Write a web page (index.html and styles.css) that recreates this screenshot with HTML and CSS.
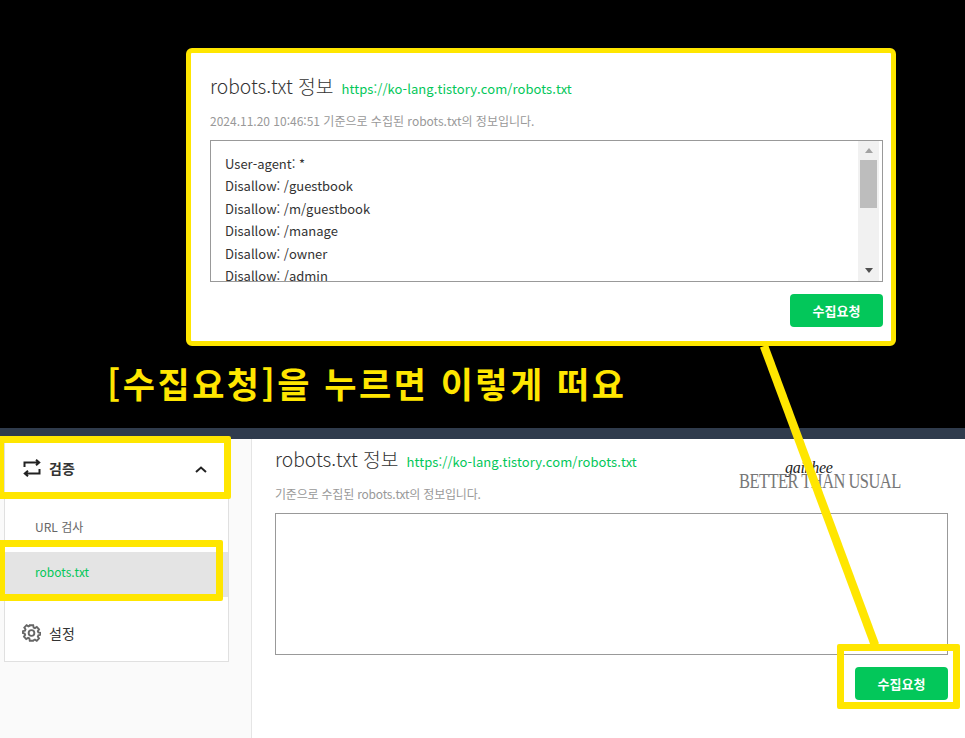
FILE: index.html
```html
<!DOCTYPE html>
<html lang="ko">
<head>
<meta charset="utf-8">
<title>robots.txt 정보</title>
<link rel="stylesheet" href="styles.css">
</head>
<body>
<div class="page">
  <section class="stage">
    <div class="popup">
      <div class="heading"><h2 class="title">robots.txt 정보</h2><a class="url">https://ko-lang.tistory.com/robots.txt</a></div>
      <p class="note">2024.11.20 10:46:51 기준으로 수집된 robots.txt의 정보입니다.</p>
      <div class="viewer">
        <div class="viewer-text">
          <div>User-agent: *</div>
          <div>Disallow: /guestbook</div>
          <div>Disallow: /m/guestbook</div>
          <div>Disallow: /manage</div>
          <div>Disallow: /owner</div>
          <div>Disallow: /admin</div>
        </div>
        <div class="scrollbar">
          <span class="arrow arrow-up"></span>
          <div class="track"><span class="thumb"></span></div>
          <span class="arrow arrow-down"></span>
        </div>
      </div>
      <div class="actions"><button class="submit">수집요청</button></div>
    </div>
    <p class="caption">[수집요청]을 누르면 이렇게 떠요</p>
  </section>
  <div class="topbar"></div>
  <div class="workspace">
    <aside class="sidebar">
      <nav class="menu">
        <div class="menu-head">
          <svg class="icon-swap" viewBox="0 0 18 18" width="18" height="18" aria-hidden="true"><path d="M1.500 8V3.500H16M13 .8l3.200 2.700L13 6.200M16.500 10v4.500H2M5 11.800l-3.200 2.700L5 17.200" fill="none" stroke="#222" stroke-width="2"/></svg>
          <span class="menu-label menu-label-strong">검증</span>
          <svg class="icon-chevron" viewBox="0 0 12 7" width="12" height="7" aria-hidden="true"><path d="M1 6l5-4.500L11 6" fill="none" stroke="#222" stroke-width="2"/></svg>
        </div>
        <a class="sub-item sub-item-first">URL 검사</a>
        <a class="sub-item sub-item-active">robots.txt</a>
        <div class="menu-foot">
          <svg class="icon-gear" viewBox="0 0 20 20" width="19" height="20" aria-hidden="true"><path d="M8 1h4l.5 2.600 1.500.7 2.200-1.400 2.600 2.800-1.400 2.100.6 1.500 2.400.6v2.200l-2.400.6-.6 1.500 1.400 2.100-2.600 2.800-2.200-1.400-1.500.7L12 19H8l-.5-2.600-1.500-.7-2.200 1.400-2.600-2.800 1.400-2.100-.6-1.500L0 10.100V7.900l2.400-.6.6-1.500-1.400-2.100 2.600-2.800 2.200 1.400 1.500-.7z" fill="none" stroke="#666" stroke-width="2.200" transform="translate(1 1) scale(.9)"/><circle cx="10" cy="10" r="3" fill="none" stroke="#666" stroke-width="2"/></svg>
          <span class="menu-label">설정</span>
        </div>
      </nav>
    </aside>
    <main class="content">
      <div class="heading"><h2 class="title">robots.txt 정보</h2><a class="url">https://ko-lang.tistory.com/robots.txt</a></div>
      <p class="note">기준으로 수집된 robots.txt의 정보입니다.</p>
      <div class="viewer viewer-empty"></div>
      <div class="actions"><button class="submit">수집요청</button></div>
    </main>
  </div>
  <div class="watermark"><span class="watermark-script">gaikhee</span><span class="watermark-text">BETTER THAN USUAL</span></div>
  <svg class="connector" viewBox="0 0 965 738" width="965" height="738" aria-hidden="true"><line x1="764" y1="346" x2="875" y2="645" stroke="#ffe600" stroke-width="8.500"/></svg>
  <div class="mark mark-head"></div>
  <div class="mark mark-item"></div>
  <div class="mark mark-button"></div>
</div>
</body>
</html>
```
FILE: styles.css
```css
* { box-sizing: border-box; }
html, body { margin: 0; padding: 0; }
body {
  background: #fff;
  color: #333;
  font-family: "Noto Sans CJK KR", "Noto Sans", sans-serif;
  overflow: hidden;
}
.page {
  position: relative;
  width: 965px;
  height: 738px;
  overflow: hidden;
}
.stage {
  height: 428px;
  background: #000;
  padding: 48px 0 0 186px;
}
.popup {
  width: 710px;
  height: 298px;
  background: #fff;
  border: 5px solid #ffe600;
  border-radius: 6px;
  padding: 18px 8px 0 19px;
}
.heading {
  display: flex;
  align-items: baseline;
  gap: 8px;
  height: 30px;
}
.title {
  margin: 0;
  font-size: 19.300px;
  font-weight: 300;
  line-height: 30px;
  color: #333;
  white-space: nowrap;
}
.url {
  font-size: 13px;
  letter-spacing: .08px;
  color: #03c75a;
  white-space: nowrap;
}
.note {
  margin: 11px 0 10px;
  font-size: 12px;
  line-height: 18px;
  color: #999;
  white-space: nowrap;
}
.viewer {
  display: flex;
  height: 142px;
  border: 1px solid #999;
  background: #fff;
  overflow: hidden;
}
.viewer-text {
  flex: 1;
  padding: 12px 14px;
  font-size: 13px;
  line-height: 22.400px;
  color: #333;
  overflow: hidden;
}
.scrollbar {
  width: 21px;
  margin: -1px 3px -1px 0;
  background: #f1f1f1;
  display: flex;
  flex-direction: column;
  align-items: center;
  padding: 8px 2px 9px;
}
.arrow {
  width: 0;
  height: 0;
  border-left: 4.500px solid transparent;
  border-right: 4.500px solid transparent;
}
.arrow-up { border-bottom: 5px solid #a3a3a3; }
.arrow-down { border-top: 5px solid #505050; }
.track {
  flex: 1;
  width: 100%;
  padding-top: 7px;
}
.thumb {
  display: block;
  width: 100%;
  height: 48px;
  background: #bdbdbd;
}
.actions {
  display: flex;
  justify-content: flex-end;
  margin-top: 12px;
}
.submit {
  width: 93px;
  height: 33px;
  border: 0;
  border-radius: 4px;
  background: #03c75a;
  color: #fff;
  font: 700 13px "Noto Sans CJK KR", sans-serif;
  padding: 0;
}
.caption {
  margin: 14px 0 0 -79px;
  font-size: 35px;
  font-weight: 700;
  line-height: 46px;
  letter-spacing: 2.500px;
  color: #ffe600;
  white-space: nowrap;
}
.topbar {
  height: 11px;
  background: #2f3b4c;
}
.workspace {
  display: flex;
  height: 299px;
}
.sidebar {
  width: 252px;
  background: #fafafa;
  border-right: 1px solid #e5e5e5;
  padding-left: 4px;
}
.menu {
  width: 225px;
  height: 223px;
  background: #fff;
  border: 1px solid #e0e0e0;
  border-top: 0;
}
.menu-head {
  display: flex;
  align-items: center;
  height: 58px;
  padding: 0 21px 0 18px;
}
.menu-label {
  font-size: 14px;
  color: #333;
  margin-left: 8px;
}
.menu-label-strong { font-weight: 700; }
.icon-chevron { margin-left: auto; margin-top: 3px; }
.sub-item {
  display: flex;
  align-items: center;
  height: 45px;
  padding: 0 0 2px 30px;
  font-size: 12px;
  color: #666;
}
.sub-item-first { margin: 8px 0 2px; }
.sub-item-active {
  background: #e4e4e4;
  color: #03c75a;
  padding-bottom: 6px;
}
.menu-foot {
  display: flex;
  align-items: center;
  height: 64px;
  padding: 7px 0 0 17px;
}
.content {
  flex: 1;
  padding: 5px 17px 0 23px;
}
.content .note { letter-spacing: -.2px; }
.viewer-empty { display: block; }
.watermark {
  position: absolute;
  left: 739px;
  top: 462px;
  width: 160px;
  height: 29px;
}
.watermark-script {
  position: absolute;
  left: 46px;
  top: -1px;
  font-family: "Liberation Serif", serif;
  font-style: italic;
  font-size: 16px;
  line-height: 14px;
  letter-spacing: -.3px;
  color: #222;
}
.watermark-text {
  position: absolute;
  left: 0;
  top: 9px;
  font-family: "Liberation Serif", serif;
  font-size: 20px;
  line-height: 20px;
  color: #777;
  white-space: nowrap;
  letter-spacing: -.6px;
  transform: scaleX(.82);
  transform-origin: left center;
}
.connector {
  position: absolute;
  left: 0;
  top: 0;
  pointer-events: none;
}
.mark {
  position: absolute;
  border: 7px solid #ffe600;
  border-radius: 2px;
}
.mark-head { left: -3px; top: 436px; width: 234px; height: 63px; }
.mark-item { left: -2px; top: 540px; width: 225px; height: 61px; }
.mark-button { left: 837px; top: 644px; width: 123px; height: 65px; }
```
